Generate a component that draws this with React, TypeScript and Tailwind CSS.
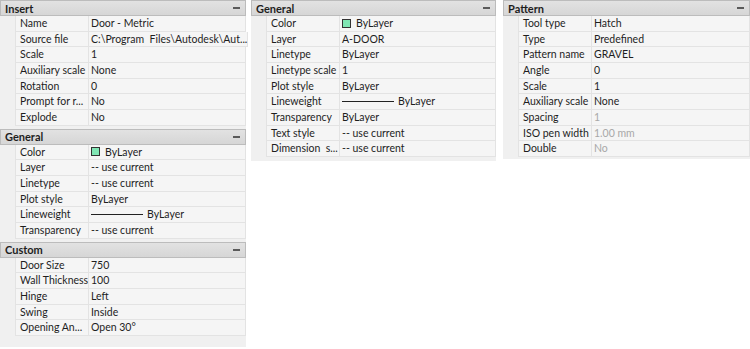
import React from 'react';

type Row = { name: string; value: React.ReactNode; dim?: boolean };
type Section = { title: string; rows: Row[] };

const Swatch = () => (
  <span className="inline-flex items-center gap-[5px]">
    <span className="inline-block w-[9px] h-[9px] border border-[#333] bg-[#80e6b4]" />
    ByLayer
  </span>
);

const Lineweight = () => (
  <span className="inline-flex items-center gap-[4px]">
    <span className="inline-block w-[52px] h-px bg-[#222]" />
    ByLayer
  </span>
);

const left: Section[] = [
  {
    title: 'Insert',
    rows: [
      { name: 'Name', value: 'Door - Metric' },
      { name: 'Source file', value: 'C:\\Program  Files\\Autodesk\\Aut...' },
      { name: 'Scale', value: '1' },
      { name: 'Auxiliary scale', value: 'None' },
      { name: 'Rotation', value: '0' },
      { name: 'Prompt for r...', value: 'No' },
      { name: 'Explode', value: 'No' },
    ],
  },
  {
    title: 'General',
    rows: [
      { name: 'Color', value: <Swatch /> },
      { name: 'Layer', value: '-- use current' },
      { name: 'Linetype', value: '-- use current' },
      { name: 'Plot style', value: 'ByLayer' },
      { name: 'Lineweight', value: <Lineweight /> },
      { name: 'Transparency', value: '-- use current' },
    ],
  },
  {
    title: 'Custom',
    rows: [
      { name: 'Door Size', value: '750' },
      { name: 'Wall Thickness', value: '100' },
      { name: 'Hinge', value: 'Left' },
      { name: 'Swing', value: 'Inside' },
      { name: 'Opening An...', value: 'Open 30°' },
    ],
  },
];

const middle: Section[] = [
  {
    title: 'General',
    rows: [
      { name: 'Color', value: <Swatch /> },
      { name: 'Layer', value: 'A-DOOR' },
      { name: 'Linetype', value: 'ByLayer' },
      { name: 'Linetype scale', value: '1' },
      { name: 'Plot style', value: 'ByLayer' },
      { name: 'Lineweight', value: <Lineweight /> },
      { name: 'Transparency', value: 'ByLayer' },
      { name: 'Text style', value: '-- use current' },
      { name: 'Dimension  s...', value: '-- use current' },
    ],
  },
];

const right: Section[] = [
  {
    title: 'Pattern',
    rows: [
      { name: 'Tool type', value: 'Hatch' },
      { name: 'Type', value: 'Predefined' },
      { name: 'Pattern name', value: 'GRAVEL' },
      { name: 'Angle', value: '0' },
      { name: 'Scale', value: '1' },
      { name: 'Auxiliary scale', value: 'None' },
      { name: 'Spacing', value: '1', dim: true },
      { name: 'ISO pen width', value: '1.00 mm', dim: true },
      { name: 'Double', value: 'No', dim: true },
    ],
  },
];

const SectionBlock = ({ section }: { section: Section }) => (
  <div>
    <div className="h-[16px] flex items-center justify-between pl-[4px] pr-[5px] bg-gradient-to-b from-[#e2e2e2] to-[#d6d6d6] border border-[#bcbcbc]">
      <span className="font-bold text-[11px] text-[#1e1e1e]">{section.title}</span>
      <span className="inline-block w-[7px] h-[2px] bg-[#5a5a5a]" />
    </div>
    {section.rows.map((r) => (
      <div key={r.name} className="flex h-[15.67px]">
        <div className="w-[15px] shrink-0" />
        <div className="w-[74px] shrink-0 flex items-center pl-[4px] whitespace-pre bg-[#f5f5f5] border-l border-r border-b border-[#e3e3e3] overflow-hidden">
          {r.name}
        </div>
        <div
          className={`flex-1 flex items-center pl-[2px] whitespace-pre bg-[#f5f5f5] border-b border-r border-[#e3e3e3] ${
            r.dim ? 'text-[#a8a8a8]' : 'text-[#1e1e1e]'
          }`}
        >
          {r.value}
        </div>
      </div>
    ))}
  </div>
);

const Panel = ({ sections, className }: { sections: Section[]; className: string }) => (
  <div className={`bg-[#f0f0f0] flex flex-col gap-[3px] ${className}`}>
    {sections.map((s) => (
      <SectionBlock key={s.title} section={s} />
    ))}
  </div>
);

export default function App() {
  return (
    <div className="w-[750px] h-[349px] bg-white flex items-start text-[10.5px] leading-none text-[#1e1e1e] font-['Lato','Liberation_Sans',sans-serif] overflow-hidden">
      <Panel sections={left} className="w-[246px] h-[347px]" />
      <Panel sections={middle} className="w-[245px] h-[161px] ml-[5px]" />
      <Panel sections={right} className="w-[247px] h-[159px] ml-[7px]" />
    </div>
  );
}
